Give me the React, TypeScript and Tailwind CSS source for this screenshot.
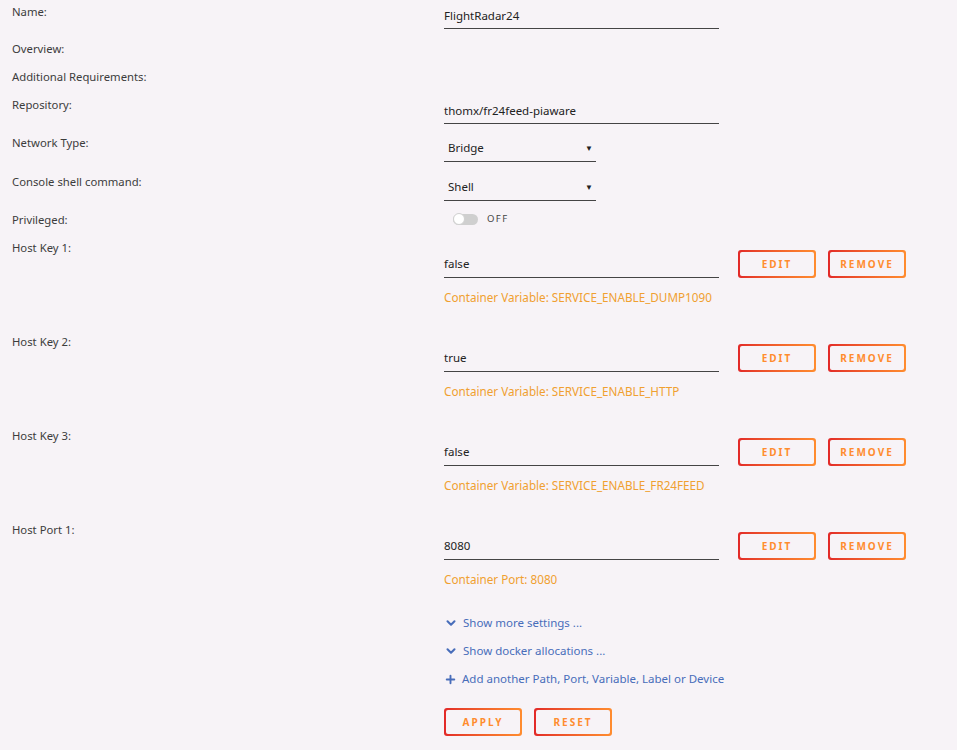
import { ChevronDown, Plus } from "lucide-react";

const font = "font-['Noto_Sans','Open_Sans',sans-serif]";

function Label({ children }: { children: React.ReactNode }) {
  return <div className="w-[444px] shrink-0 pl-3 pt-[5px] text-[11.3px] leading-[14px] text-[#3c3c3c]">{children}</div>;
}

function GradButton({ children }: { children: React.ReactNode }) {
  return (
    <div className="rounded-[3px] bg-linear-to-r from-[#e22828] to-[#ff8c2f] p-[2px]">
      <div className="flex h-[24px] w-[74px] items-center justify-center rounded-[2px] bg-[#f7f3f7] text-[10px] font-bold tracking-[0.2em] text-[#ff8c2f]">
        {children}
      </div>
    </div>
  );
}

function TextInput({ value, className = "" }: { value: string; className?: string }) {
  return (
    <div className={`flex w-[275px] items-center border-b border-[#444] text-[11.5px] text-[#222] ${className}`}>{value}</div>
  );
}

function Select({ value, className = "" }: { value: string; className?: string }) {
  return (
    <div className={`flex w-[152px] items-center justify-between border-b border-[#444] pl-1 pr-[3px] text-[11.5px] text-[#222] ${className}`}>
      <span>{value}</span>
      <span className="text-[8px]">▼</span>
    </div>
  );
}

const hostRows = [
  { label: "Host Key 1:", value: "false", desc: "Container Variable: SERVICE_ENABLE_DUMP1090" },
  { label: "Host Key 2:", value: "true", desc: "Container Variable: SERVICE_ENABLE_HTTP" },
  { label: "Host Key 3:", value: "false", desc: "Container Variable: SERVICE_ENABLE_FR24FEED" },
  { label: "Host Port 1:", value: "8080", desc: "Container Port: 8080" },
];

export default function App() {
  return (
    <div className={`min-h-[750px] w-full bg-[#f7f3f7] ${font}`}>
      <div className="flex h-[37px]">
        <Label>Name:</Label>
        <TextInput value="FlightRadar24" className="mt-[4px] h-[25px]" />
      </div>
      <div className="flex h-[28px]">
        <Label>Overview:</Label>
      </div>
      <div className="flex h-[28px]">
        <Label>Additional Requirements:</Label>
      </div>
      <div className="flex h-[38px]">
        <Label>Repository:</Label>
        <TextInput value="thomx/fr24feed-piaware" className="mt-[5px] h-[26px]" />
      </div>
      <div className="flex h-[39px]">
        <Label>Network Type:</Label>
        <Select value="Bridge" className="mt-[4px] h-[27px]" />
      </div>
      <div className="flex h-[38px]">
        <Label>Console shell command:</Label>
        <Select value="Shell" className="mt-[3px] h-[28px]" />
      </div>
      <div className="flex h-[28px]">
        <Label>Privileged:</Label>
        <div className="ml-[9px] mt-[5px] flex h-[12px] items-center gap-[9px]">
          <div className="relative h-[11px] w-[25px] rounded-full bg-[#cfcfcf]">
            <div className="absolute left-0 top-[-0.5px] h-[12px] w-[12px] rounded-full border border-[#d0d0d0] bg-white" />
          </div>
          <span className="text-[9.5px] tracking-[0.15em] text-[#444]">OFF</span>
        </div>
      </div>

      {hostRows.map((r) => (
        <div key={r.label} className="flex h-[94px]">
          <Label>{r.label}</Label>
          <div className="mt-[14px]">
            <div className="flex items-start">
              <TextInput value={r.value} className="h-[28px]" />
              <div className="ml-[19px] flex gap-[12px]">
                <GradButton>EDIT</GradButton>
                <GradButton>REMOVE</GradButton>
              </div>
            </div>
            <div className="mt-[11px] text-[11.7px] leading-[16px] text-[#f0a030]">{r.desc}</div>
          </div>
        </div>
      ))}

      <div className="ml-[444px] flex flex-col gap-[12px] pt-[3px] text-[11.5px] leading-[16px] text-[#486dba]">
        <div className="flex items-center gap-[5px]">
          <ChevronDown size={14} strokeWidth={3.5} />
          <span>Show more settings ...</span>
        </div>
        <div className="flex items-center gap-[5px]">
          <ChevronDown size={14} strokeWidth={3.5} />
          <span>Show docker allocations ...</span>
        </div>
        <div className="flex items-center gap-[5px]">
          <Plus size={13} strokeWidth={3.5} />
          <span>Add another Path, Port, Variable, Label or Device</span>
        </div>
      </div>
      <div className="ml-[444px] mt-[21px] flex gap-[12px] pb-[13px]">
        <GradButton>APPLY</GradButton>
        <GradButton>RESET</GradButton>
      </div>
    </div>
  );
}
